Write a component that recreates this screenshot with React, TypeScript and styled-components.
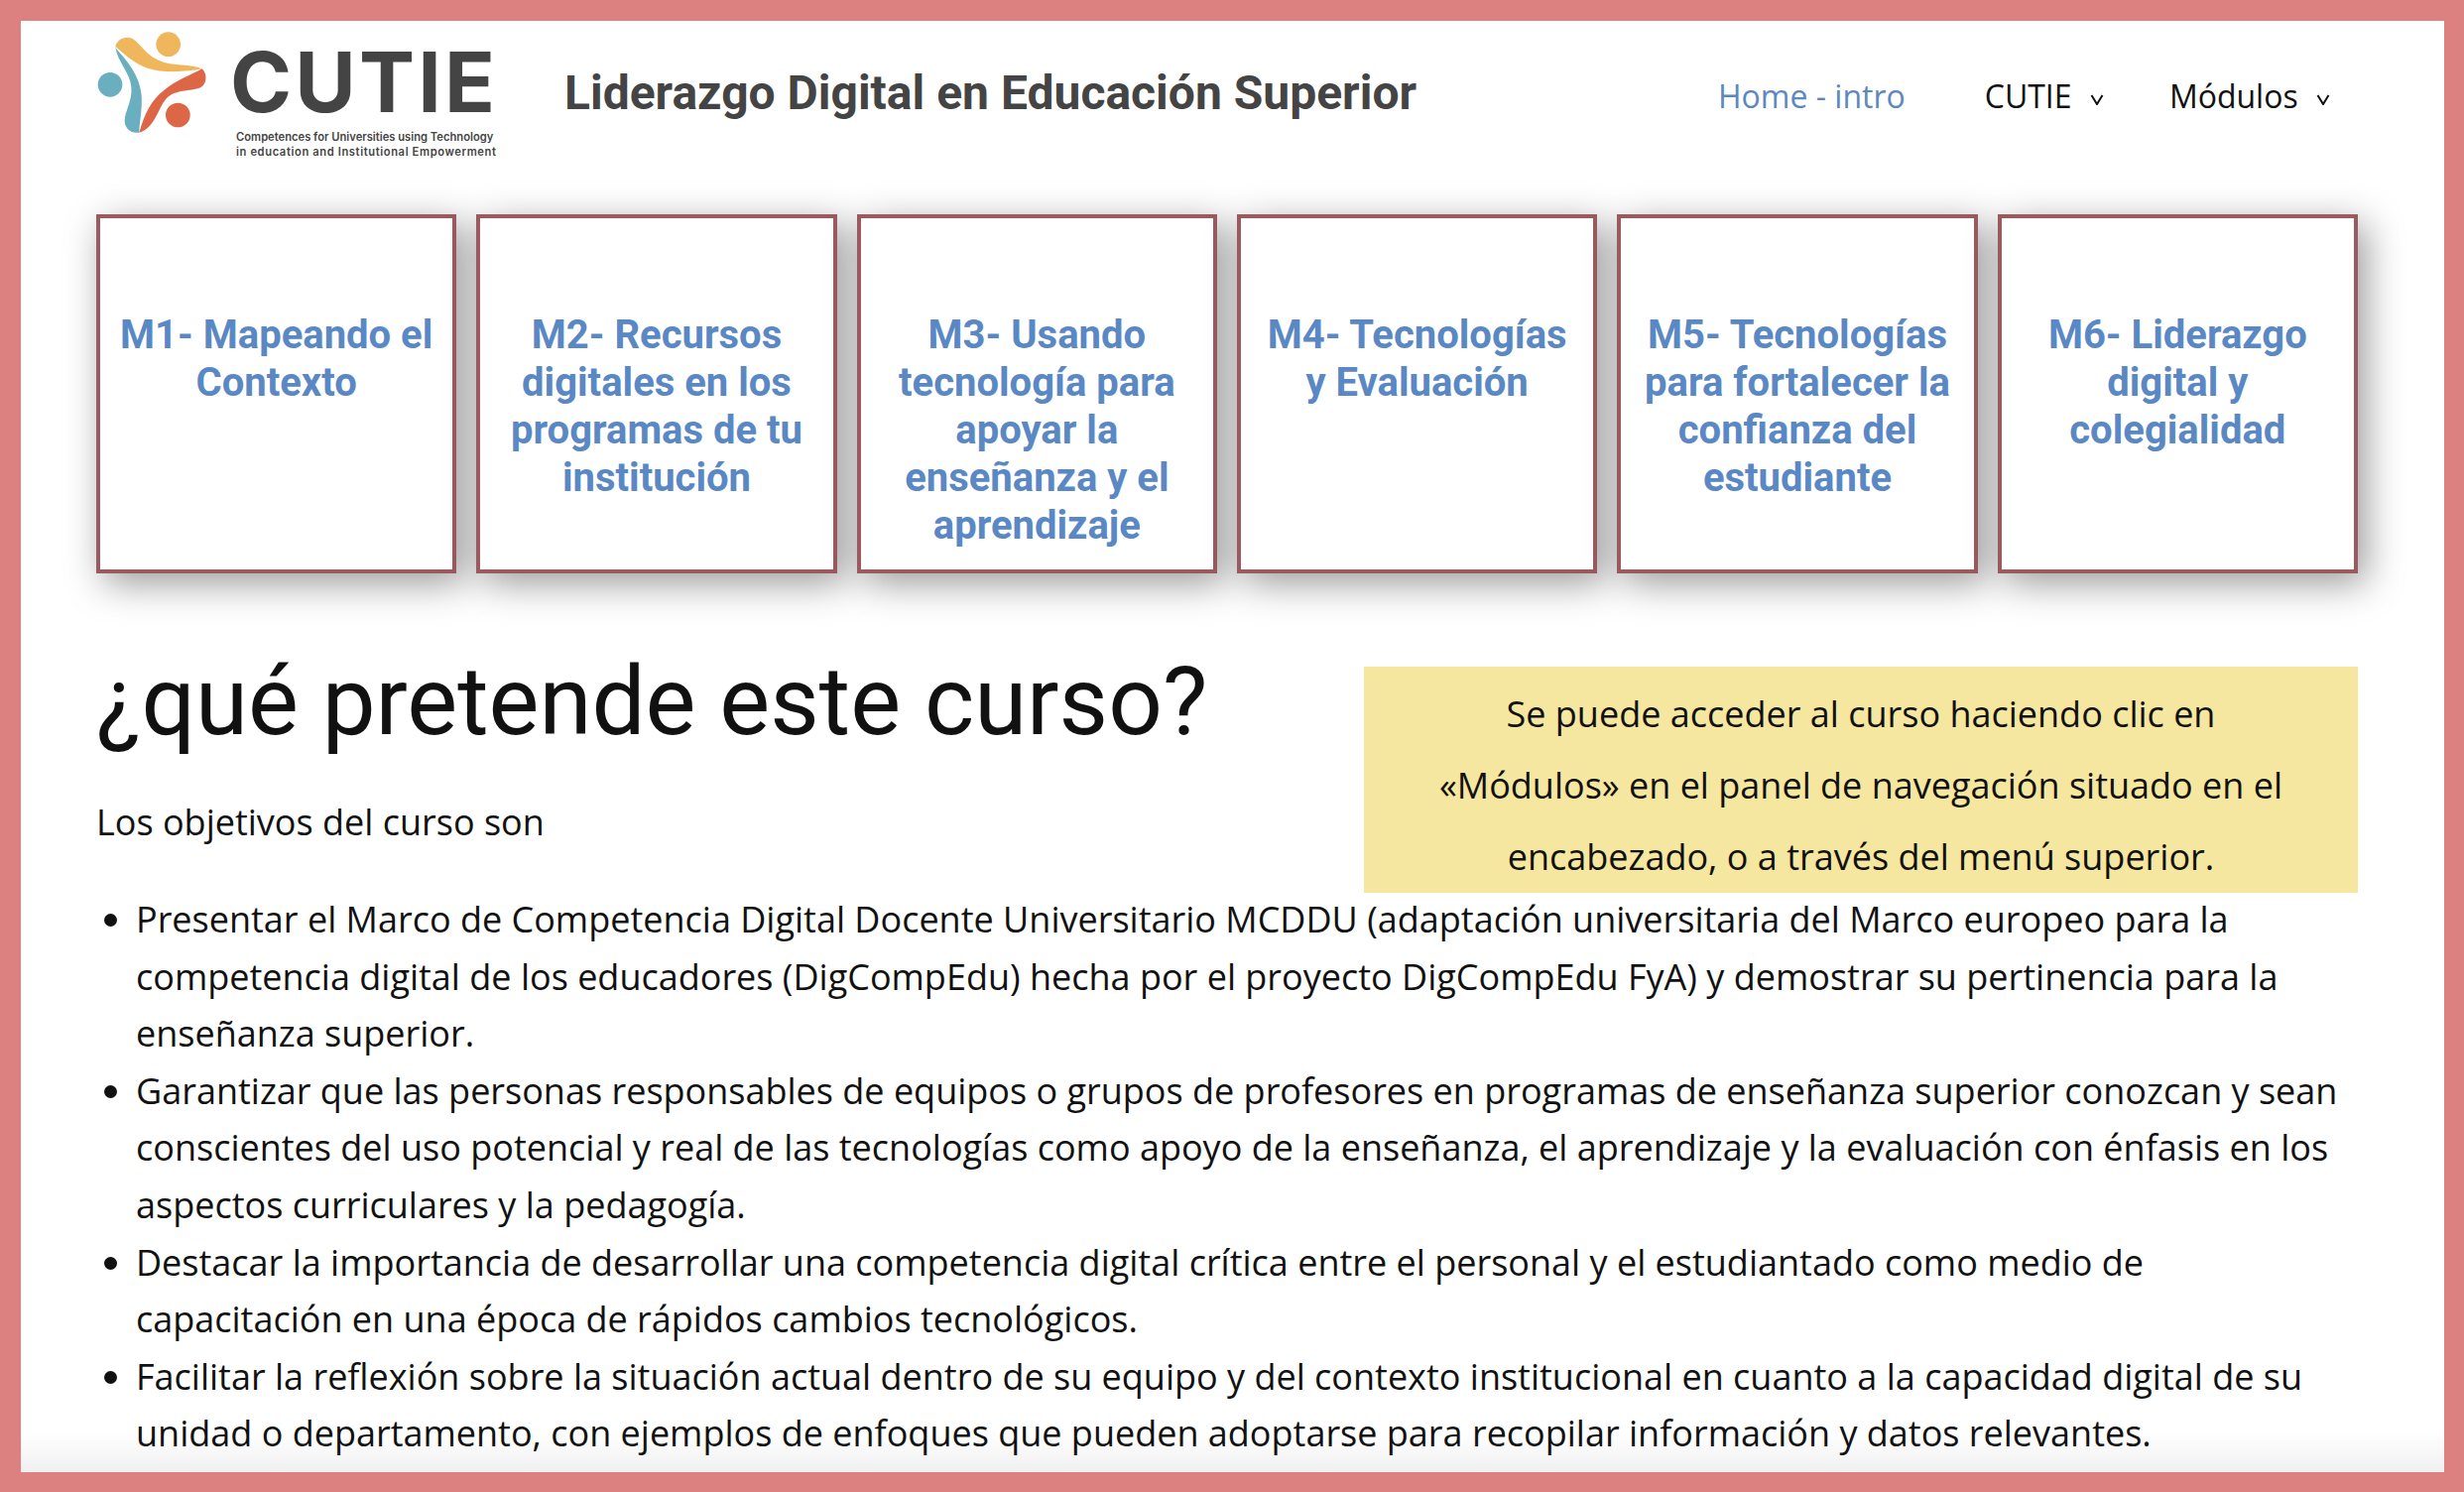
import * as React from 'react';
import styled, { createGlobalStyle } from 'styled-components';

const GlobalStyle = createGlobalStyle`
  html, body { margin: 0; padding: 0; height: 100%; background: #fff; }
  body { font-family: "Open Sans", "Noto Sans", sans-serif; color: #111; overflow: hidden; }
`;

const modules = [
  'M1- Mapeando el Contexto',
  'M2- Recursos digitales en los programas de tu institución',
  'M3- Usando tecnología para apoyar la enseñanza y el aprendizaje',
  'M4- Tecnologías y Evaluación',
  'M5- Tecnologías para fortalecer la confianza del estudiante',
  'M6- Liderazgo digital y colegialidad',
];

const objectives = [
  'Presentar el Marco de Competencia Digital Docente Universitario MCDDU (adaptación universitaria del Marco europeo para la competencia digital de los educadores (DigCompEdu) hecha por el proyecto DigCompEdu FyA) y demostrar su pertinencia para la enseñanza superior.',
  'Garantizar que las personas responsables de equipos o grupos de profesores en programas de enseñanza superior conozcan y sean conscientes del uso potencial y real de las tecnologías como apoyo de la enseñanza, el aprendizaje y la evaluación con énfasis en los aspectos curriculares y la pedagogía.',
  'Destacar la importancia de desarrollar una competencia digital crítica entre el personal y el estudiantado como medio de capacitación en una época de rápidos cambios tecnológicos.',
  'Facilitar la reflexión sobre la situación actual dentro de su equipo y del contexto institucional en cuanto a la capacidad digital de su unidad o departamento, con ejemplos de enfoques que pueden adoptarse para recopilar información y datos relevantes.',
];

const Chevron = () => (
  <ChevronIcon viewBox="0 0 14 11">
    <path d="M1.5 1 L7 10 L12.5 1" fill="none" stroke="#111" strokeWidth="2" />
  </ChevronIcon>
);

const LogoMark = () => (
  <LogoSvg viewBox="110 90 336 315">
    <circle cx="328" cy="131" r="37" fill="#efb65c" />
    <circle cx="152" cy="253" r="37" fill="#6aafbf" />
    <circle cx="357" cy="345" r="37" fill="#dd6647" />
    <path d="M168 138 C172 118 195 105 215 112 C240 122 255 160 300 180 C340 198 400 190 430 205 C380 215 310 218 265 203 C225 190 195 160 168 138 Z" fill="#efb65c" />
    <path d="M168 140 C185 165 240 210 247 285 C250 330 240 370 240 398 C215 402 195 385 196 360 C198 330 220 300 216 260 C212 215 175 185 168 140 Z" fill="#6aafbf" />
    <path d="M430 205 C445 218 447 250 425 262 C395 275 345 265 318 300 C295 332 285 385 240 398 C255 345 275 300 315 270 C350 240 395 225 430 205 Z" fill="#dd6647" />
  </LogoSvg>
);

export default function App() {
  return (
    <Frame>
      <GlobalStyle />
      <Header>
        <LogoMark />
        <LogoText>
          <LogoName>CUTIE</LogoName>
          <LogoTagline>
            <TaglineLine>Competences for Universities using Technology</TaglineLine>
            <TaglineLine $spread>in education and Institutional Empowerment</TaglineLine>
          </LogoTagline>
        </LogoText>
        <SiteTitle>Liderazgo Digital en Educación Superior</SiteTitle>
        <Nav>
          <NavItem $active>Home - intro</NavItem>
          <NavItem>CUTIE <Chevron /></NavItem>
          <NavItem>Módulos <Chevron /></NavItem>
        </Nav>
      </Header>

      <CardRow>
        {modules.map((m) => (
          <Card key={m}>{m}</Card>
        ))}
      </CardRow>

      <Intro>
        <div>
          <Heading>¿qué pretende este curso?</Heading>
          <Lead>Los objetivos del curso son</Lead>
        </div>
        <Notice>
          Se puede acceder al curso haciendo clic en «Módulos» en el panel de navegación situado en el
          encabezado, o a través del menú superior.
        </Notice>
      </Intro>

      <Objectives>
        {objectives.map((o) => (
          <li key={o}>{o}</li>
        ))}
      </Objectives>
    </Frame>
  );
}

const Frame = styled.div`
  box-sizing: border-box;
  height: 1504px;
  border: solid #dd8080;
  border-width: 21px 20px 20px 21px;
  padding: 0 87px 0 76px;
  overflow: hidden;
  background: linear-gradient(to top, #f0f0f0, #fff 40px);
`;
const Header = styled.header`
  display: flex;
  align-items: flex-start;
  height: 195px;
`;
const LogoSvg = styled.svg`
  width: 112px;
  height: 105px;
  margin-top: 10px;
  flex: none;
`;
const LogoText = styled.div`
  margin-left: 23px;
  width: 262px;
  flex: none;
  color: #444;
`;
const LogoName = styled.div`
  font-family: Inter, sans-serif;
  font-weight: 700;
  font-size: 84px;
  line-height: 70px;
  margin-top: 27px;
  letter-spacing: 3.2px;
`;
const LogoTagline = styled.div`
  font-family: Inter, sans-serif;
  font-weight: 600;
  font-size: 11.2px;
  line-height: 14.5px;
  margin-top: 13px;
  padding-left: 6px;
  white-space: nowrap;
`;
const TaglineLine = styled.div<{ $spread?: boolean }>`
  letter-spacing: ${(p) => (p.$spread ? '0.6px' : '0')};
`;
const SiteTitle = styled.div`
  margin: 43px 0 0 75px;
  font-family: Roboto, sans-serif;
  font-weight: 700;
  font-size: 48px;
  line-height: 60px;
  color: #444;
  white-space: nowrap;
`;
const Nav = styled.nav`
  display: flex;
  margin: 50px 0 0 auto;
  padding-right: 28px;
  gap: 66px;
`;
const NavItem = styled.div<{ $active?: boolean }>`
  font-size: 32px;
  line-height: 52px;
  color: ${(p) => (p.$active ? '#5b88c0' : '#111')};
  white-space: nowrap;
  padding-right: ${(p) => (p.$active ? '14px' : '0')};
`;
const ChevronIcon = styled.svg`
  width: 14px;
  height: 11px;
  margin-left: 10px;
  position: relative;
  top: -3px;
`;
const CardRow = styled.div`
  display: grid;
  grid-template-columns: repeat(6, 1fr);
  gap: 20px;
`;
const Card = styled.div`
  box-sizing: border-box;
  height: 362px;
  padding: 94px 16px 0;
  background: #fff;
  border: 4px solid #9b5a60;
  box-shadow: 8px 10px 36px rgba(0, 0, 0, 0.4);
  font-family: Roboto, sans-serif;
  font-weight: 700;
  font-size: 40px;
  line-height: 48px;
  text-align: center;
  color: #5a88c4;
`;
const Intro = styled.div`
  display: flex;
  justify-content: space-between;
  align-items: flex-start;
  margin-top: 94px;
`;
const Heading = styled.h1`
  margin: -22px 0 0;
  font-family: Roboto, sans-serif;
  font-weight: 400;
  font-size: 96px;
  line-height: 114px;
  color: #111;
`;
const Lead = styled.p`
  margin: 36px 0 0;
  font-size: 36px;
  line-height: 58px;
`;
const Notice = styled.div`
  box-sizing: border-box;
  width: 1002px;
  height: 228px;
  padding: 12px 60px 0;
  background: #f6e7a0;
  text-align: center;
  font-size: 36px;
  line-height: 72px;
`;
const Objectives = styled.ul`
  margin: -2px 0 0;
  padding: 0 0 0 40px;
  font-size: 36px;
  line-height: 57.6px;
`;
